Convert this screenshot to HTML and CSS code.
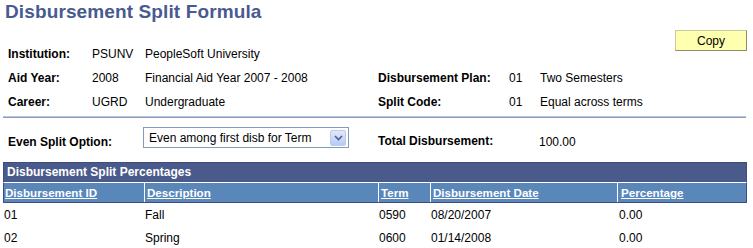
FILE: index.html
```html
<!DOCTYPE html>
<html>
<head>
<meta charset="utf-8">
<link rel="stylesheet" href="styles.css">
</head>
<body>
<div class="page">
  <h1 class="title">Disbursement Split Formula</h1>
  <div class="copy-row"><button class="copy-btn">Copy</button></div>
  <div class="info">
    <div class="lbl">Institution:</div><div class="val">PSUNV</div><div class="val">PeopleSoft University</div><div></div><div></div><div></div>
    <div class="lbl">Aid Year:</div><div class="val">2008</div><div class="val">Financial Aid Year 2007 - 2008</div><div class="lbl">Disbursement Plan:</div><div class="val">01</div><div class="val">Two Semesters</div>
    <div class="lbl">Career:</div><div class="val">UGRD</div><div class="val">Undergraduate</div><div class="lbl">Split Code:</div><div class="val">01</div><div class="val">Equal across terms</div>
  </div>
  <div class="sep"></div>
  <div class="split-row">
    <div class="lbl split-lbl">Even Split Option:</div>
    <div class="select">
      <span class="select-text">Even among first disb for Term</span>
      <span class="select-arrow"><svg width="9" height="6" viewBox="0 0 9 6"><path d="M1 1 L4.5 4.5 L8 1" fill="none" stroke="#4d6185" stroke-width="1.6"/></svg></span>
    </div>
    <div class="lbl total-lbl">Total Disbursement:</div>
    <div class="val total-val">100.00</div>
  </div>
  <div class="grid">
    <div class="grid-title">Disbursement Split Percentages</div>
    <div class="grid-head">
      <div class="c1"><a>Disbursement ID</a></div>
      <div class="c2"><a>Description</a></div>
      <div class="c3"><a>Term</a></div>
      <div class="c4"><a>Disbursement Date</a></div>
      <div class="c5"><a>Percentage</a></div>
    </div>
    <div class="grid-row">
      <div class="c1">01</div><div class="c2">Fall</div><div class="c3">0590</div><div class="c4">08/20/2007</div><div class="c5">0.00</div>
    </div>
    <div class="grid-row">
      <div class="c1">02</div><div class="c2">Spring</div><div class="c3">0600</div><div class="c4">01/14/2008</div><div class="c5">0.00</div>
    </div>
  </div>
</div>
</body>
</html>
```

FILE: styles.css
```css
html, body { margin: 0; padding: 0; background: #fff; }
body { font-family: Arial, "Liberation Sans", sans-serif; font-size: 12px; color: #000; }
.page { width: 753px; height: 248px; overflow: hidden; }
.title {
  margin: 0; padding: 0 0 0 5px;
  font-size: 19px; font-weight: bold; line-height: 24px; letter-spacing: 0.12px;
  color: #485a8f;
}
.copy-row { display: flex; justify-content: flex-end; padding-right: 6px; margin-top: 6px; height: 12px; }
.copy-btn {
  width: 72px; height: 21px; padding: 0; margin: 0;
  background: #ffffb0;
  border: 1px solid #c9c9a0;
  border-right-color: #8c8c70; border-bottom-color: #8c8c70;
  font-family: Arial, "Liberation Sans", sans-serif; font-size: 12px; color: #000;
}
.info {
  display: grid;
  grid-template-columns: 84px 53px 233px 131px 31px 1fr;
  grid-auto-rows: 24px;
  padding-left: 8px;
  align-items: center;
}
.lbl { font-weight: bold; }
.sep {
  margin: 2px 7px 0 3px; height: 0;
  border-top: 1px solid #b9c6e2;
  border-bottom: 1px solid #8d9cbc;
}
.split-row {
  display: flex; align-items: flex-start; height: 44px; padding-left: 8px;
  line-height: 14px;
}
.split-lbl { width: 135px; margin-top: 17px; }
.select {
  width: 206px; height: 21px; box-sizing: border-box;
  border: 1px solid #7f9db9; background: #fff;
  display: flex; align-items: center; justify-content: space-between;
  padding: 0 2px 0 5px; margin-top: 9px;
}
.select-arrow {
  width: 16px; height: 16px; box-sizing: border-box;
  display: flex; align-items: center; justify-content: center;
  background: linear-gradient(#dfe8fb, #b7cbf3);
  border: 1px solid #bccbec; border-radius: 2px;
}
.total-lbl { margin-left: 29px; width: 161px; margin-top: 16px; }
.total-val { margin-top: 17px; }
.grid { margin: 0 6px 0 3px; }
.grid-title {
  background: #4a5a8b; color: #fff; font-weight: bold; font-size: 12px;
  height: 19px; line-height: 19px; padding-left: 3px;
  border: 1px solid #3e4c80; border-bottom: none;
}
.grid-head {
  display: flex; background: #5a87ba;
  border: 1px solid #3e4c80; border-top: 1px solid #fff;
  box-sizing: border-box; height: 21px;
}
.grid-head > div { border-left: 1px solid #fff; line-height: 19px; font-weight: bold; font-size: 11.6px; }
.grid-head > div.c1 { border-left: none; }
.grid-head a { color: #fff; text-decoration: underline; }
.grid-row { display: flex; height: 23px; align-items: center; }
.c1 { width: 140px; box-sizing: border-box; padding-left: 1px; }
.c2 { width: 234px; box-sizing: border-box; padding-left: 2px; }
.c3 { width: 52px; box-sizing: border-box; padding-left: 2px; }
.c4 { width: 187px; box-sizing: border-box; padding-left: 2px; }
.c5 { flex: 1; box-sizing: border-box; padding-left: 3px; }
.grid-row > .c1 { padding-left: 1px; }
```
